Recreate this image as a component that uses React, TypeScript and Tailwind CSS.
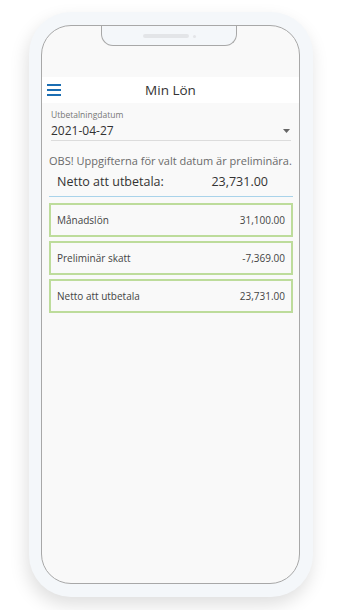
import React from 'react';

const rows = [
  { label: 'Månadslön', value: '31,100.00' },
  { label: 'Preliminär skatt', value: '-7,369.00' },
  { label: 'Netto att utbetala', value: '23,731.00' },
];

export default function App() {
  return (
    <div className="w-[342px] h-[610px] bg-white overflow-hidden" style={{ fontFamily: '"Open Sans", "Noto Sans", sans-serif' }}>
      <div className="ml-[29px] mt-[12px] w-[284px] h-[585px] rounded-[42px] bg-[#f4f7fa] pl-[12px] pr-[13px] pt-[13px] pb-[13px] shadow-[-2px_8px_18px_rgba(0,0,0,0.13)]">
        <div className="relative h-full rounded-[30px] border border-[#a8a8a8] bg-[#f9f9f9] overflow-hidden flex flex-col">
          {/* notch */}
          <div className="absolute left-[59px] top-[-1px] w-[136px] h-[21px] bg-[#f4f7fa] border border-t-0 border-[#a8a8a8] rounded-b-[12px] flex items-center justify-center gap-[4px] pt-[2px]">
            <div className="w-[46px] h-[4px] rounded-full bg-[#e3e5e8]" />
            <div className="w-[3px] h-[3px] rounded-full bg-[#e3e5e8]" />
          </div>

          <div className="h-[51px] shrink-0" />

          {/* header */}
          <div className="h-[26px] shrink-0 bg-white flex items-center">
            <div className="ml-[5px] w-[14px] flex flex-col gap-[3px]">
              <div className="h-[2px] bg-[#1b6eb3]" />
              <div className="h-[2px] bg-[#1b6eb3]" />
              <div className="h-[2px] bg-[#1b6eb3]" />
            </div>
            <div className="flex-1 text-center text-[13.5px] text-[#333]">Min Lön</div>
            <div className="w-[19px]" />
          </div>

          <div className="pl-[7px] pr-[6px] pt-[6px]">
            <div className="mx-[2px]">
              <div className="text-[8.5px] leading-[12px] text-[#777]">Utbetalningdatum</div>
              <div className="h-[20px] flex items-center justify-between border-b border-[#dcdcdc]">
                <span className="text-[12px] text-[#333]">2021-04-27</span>
                <svg width="7" height="4" viewBox="0 0 7 4" className="mr-[1px]">
                  <path d="M0 0H7L3.5 4Z" fill="#666" />
                </svg>
              </div>
            </div>

            <div className="mt-[12px] text-[11px] leading-[16px] text-[#6a6a6a] whitespace-nowrap">
              OBS! Uppgifterna för valt datum är preliminära.
            </div>

            <div className="h-[28px] flex items-center justify-between pl-[8px] pr-[25px] border-b border-[#a9d3ea]">
              <span className="text-[12.5px] text-[#333]">Netto att utbetala:</span>
              <span className="text-[12.5px] text-[#333]">23,731.00</span>
            </div>

            <div className="mt-[6px] flex flex-col gap-[4px]">
              {rows.map((r) => (
                <div key={r.label} className="h-[34px] border-2 border-[#bddc9b] flex items-center justify-between pl-[6px] pr-[6px]">
                  <span className="text-[10px] text-[#444]">{r.label}</span>
                  <span className="text-[10px] text-[#444]">{r.value}</span>
                </div>
              ))}
            </div>
          </div>
        </div>
      </div>
    </div>
  );
}
